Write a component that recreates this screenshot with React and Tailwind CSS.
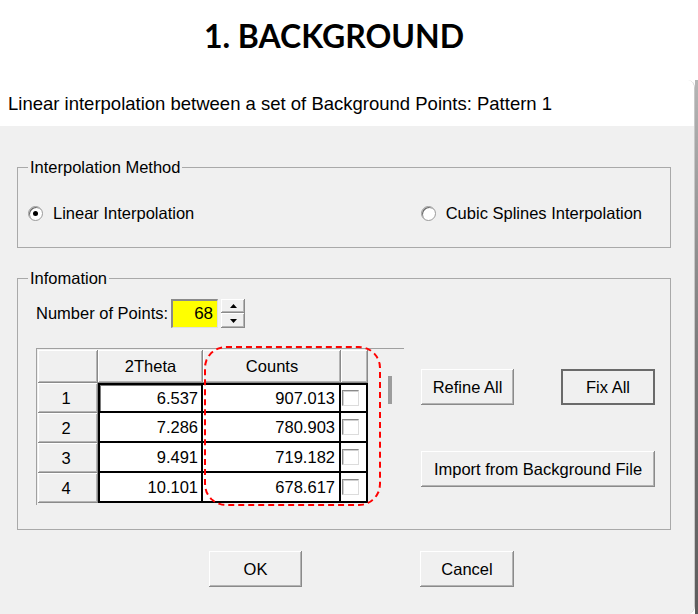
const rows = [
  ["1", "6.537", "907.013"],
  ["2", "7.286", "780.903"],
  ["3", "9.491", "719.182"],
  ["4", "10.101", "678.617"],
];

const raised =
  "bg-[#f0f0f0] shadow-[inset_-1px_-1px_0_#8a8a8a,inset_1px_1px_0_#ffffff,inset_-2px_-2px_0_#b4b4b4]";

function WinButton({ children, className = "", isDefault = false }) {
  return (
    <button
      type="button"
      className={`flex h-[36px] items-center justify-center text-[16.5px] text-black ${raised} ${
        isDefault ? "outline outline-[2px] -outline-offset-[2px] outline-[#6a6a6a]" : ""
      } ${className}`}
    >
      <span className={isDefault ? "pt-[1px]" : ""}>{children}</span>
    </button>
  );
}

function Radio({ checked, label }) {
  return (
    <label className="flex items-center gap-[10px]">
      <span className="flex h-[15px] w-[15px] items-center justify-center rounded-full border border-[#9a9a9a] bg-white shadow-[inset_1px_1px_0_#6a6a6a]">
        {checked ? <span className="h-[5px] w-[5px] rounded-full bg-black" /> : null}
      </span>
      <span>{label}</span>
    </label>
  );
}

function GroupBox({ title, className = "", children }) {
  return (
    <fieldset className={`w-[654px] border border-[#a9a9a9] ${className}`}>
      <legend className="ml-[10px] px-[2px] leading-[18px]">{title}</legend>
      {children}
    </fieldset>
  );
}

function Arrow({ up }) {
  return (
    <svg width="7" height="4" viewBox="0 0 7 4">
      <path d={up ? "M0 4 L3.5 0 L7 4 Z" : "M0 0 L3.5 4 L7 0 Z"} fill="#000" />
    </svg>
  );
}

function Checkbox() {
  return (
    <span className="block h-[16px] w-[17px] border border-t-[#8a8a8a] border-l-[#8a8a8a] border-r-[#dcdcdc] border-b-[#dcdcdc] bg-white shadow-[inset_1px_1px_0_#d0d0d0]" />
  );
}

function DataGrid() {
  const hdr = `flex items-center justify-center ${raised}`;
  return (
    <div className="relative flex h-[157px] w-[368px] border-t border-l border-[#a0a0a0] bg-[#f0f0f0]">
      <div className="ml-[1px] mt-[1px] grid grid-cols-[60px_105px_138px_27px] grid-rows-[33px_30px_30px_30px_30px]">
        <div className={hdr} />
        <div className={hdr}>2Theta</div>
        <div className={hdr}>Counts</div>
        <div className={hdr} />
        {rows.map(([n, theta, counts], i) => (
          <div key={n} className="contents">
            <div className={`${hdr} pr-[4px]`}>{n}</div>
            <div
              className={`flex items-center justify-end border-b-2 border-l-2 border-r-2 border-black bg-white pr-[3px] ${
                i === 0 ? "border-t-2 shadow-[inset_1px_1px_0_#7a7a7a]" : ""
              }`}
            >
              {theta}
            </div>
            <div
              className={`flex items-center justify-end border-b-2 border-r-2 border-black bg-white pr-[4px] ${
                i === 0 ? "border-t-2" : ""
              }`}
            >
              {counts}
            </div>
            <div
              className={`flex items-center border-b-2 border-r-2 border-black bg-white pl-[1px] ${
                i === 0 ? "border-t-2" : ""
              }`}
            >
              <Checkbox />
            </div>
          </div>
        ))}
      </div>
      <div className="flex-1 pt-[27px] pl-[20px]">
        <div className="h-[28px] w-[4px] bg-[#9c9c9c]" />
      </div>
      <div className="pointer-events-none absolute left-[167px] top-[-3px] h-[160px] w-[177px] rounded-[22px] border-2 border-dashed border-[#ff0000]" />
    </div>
  );
}

export default function App() {
  return (
    <div className="h-[614px] w-[698px] overflow-hidden bg-white font-['Liberation_Sans',Arial,sans-serif] text-[16.5px] text-black">
      <div className="flex h-[80px] items-center justify-center pb-[8px] pr-[30px] font-['Lato','Open_Sans',sans-serif] text-[32px] font-bold">
        1. BACKGROUND
      </div>
      <div className="flex h-[534px]">
        <div className="flex w-[695px] flex-col overflow-hidden rounded-tr-[8px] rounded-br-[8px] border-r border-[#c9c9c9]">
          <div className="flex h-[46px] items-center bg-white pl-[8px] pt-[1px] text-[18.5px]">
            Linear interpolation between a set of Background Points: Pattern 1
          </div>
          <div className="flex flex-1 flex-col bg-[#f0f0f0] pl-[17px] pt-[32px]">
            <GroupBox title="Interpolation Method" className="h-[90px]">
              <div className="mt-[27px] flex h-[20px] items-center justify-between pl-[10px] pr-[28px]">
                <Radio checked label="Linear Interpolation" />
                <Radio label="Cubic Splines Interpolation" />
              </div>
            </GroupBox>

            <GroupBox title="Infomation" className="mt-[21px] h-[261px]">
              <div className="pl-[18px] pt-[12px]">
                <div className="flex h-[29px] items-center">
                  <span>Number of Points:</span>
                  <div className="ml-[3px] flex h-[29px] w-[47px] items-center justify-end border-t-2 border-l-2 border-[#8a8a8a] border-r border-b border-r-[#e0e0e0] border-b-[#e0e0e0] bg-[#ffff00] pr-[4px] text-[17px]">
                    68
                  </div>
                  <div className="ml-[3px] flex h-[29px] w-[24px] flex-col">
                    <div className={`flex h-[14px] items-center justify-center ${raised}`}>
                      <Arrow up />
                    </div>
                    <div className={`flex h-[15px] items-center justify-center ${raised}`}>
                      <Arrow />
                    </div>
                  </div>
                </div>

                <div className="mt-[20px] flex">
                  <DataGrid />
                  <div className="ml-[17px] flex flex-col pt-[21px]">
                    <div className="flex w-[234px] justify-between">
                      <WinButton className="h-[35px] w-[93px]">Refine All</WinButton>
                      <WinButton isDefault className="h-[35px] w-[94px]">
                        Fix All
                      </WinButton>
                    </div>
                    <WinButton className="mt-[46px] h-[35px] w-[234px]">Import from Background File</WinButton>
                  </div>
                </div>
              </div>
            </GroupBox>

            <div className="mt-[21px] flex pl-[192px]">
              <WinButton className="w-[93px]">OK</WinButton>
              <WinButton className="ml-[118px] w-[94px]">Cancel</WinButton>
            </div>
          </div>
        </div>
        <div className="w-[3px] bg-gradient-to-b from-[#b5b5b5] via-[#7c7c7c] to-[#5c5c5c]" />
      </div>
    </div>
  );
}
